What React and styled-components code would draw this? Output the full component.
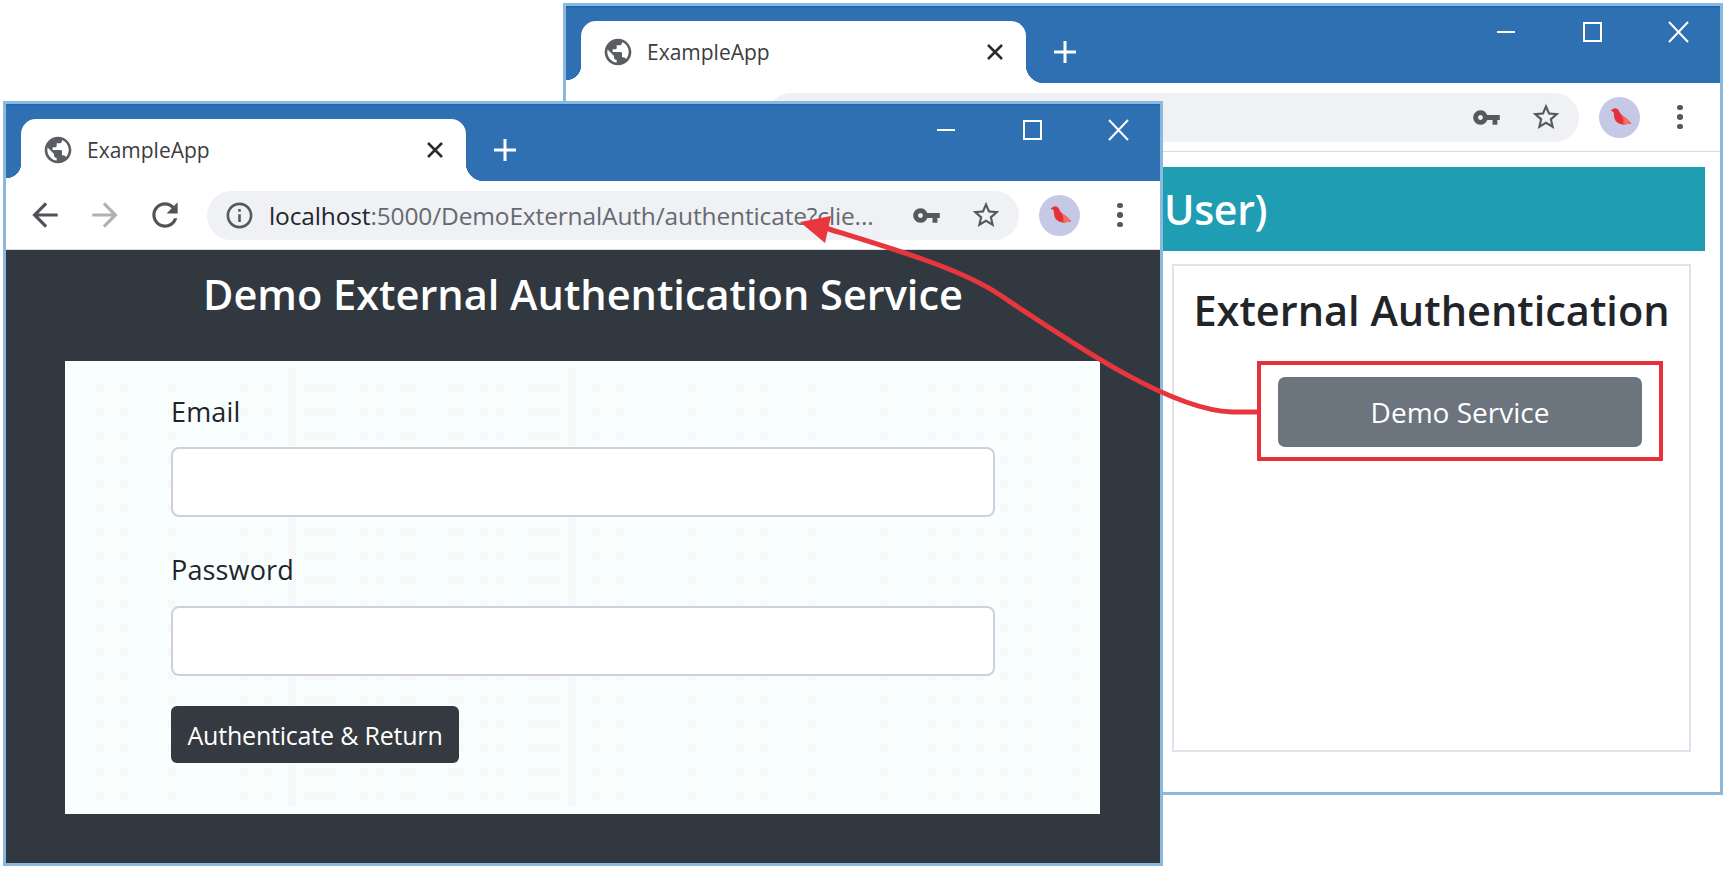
import React from 'react';
import styled, { createGlobalStyle } from 'styled-components';

const BLUE = '#2f70b3';
const FONT = '"Open Sans", "Noto Sans", sans-serif';

// faint specks in the card: [x from card edge, width], repeated every 24px down the card
const SPECKS = [
  [31, 8], [55, 8], [103, 8], [175, 8], [199, 8], [239, 32], [295, 8], [311, 8],
  [335, 16], [383, 16], [415, 8], [431, 8], [463, 32], [527, 8], [551, 8], [623, 8],
  [671, 8], [695, 8], [743, 8], [815, 8], [863, 8], [887, 8], [911, 8], [935, 8],
  [959, 8], [1007, 8],
];
const SPECK_LINES = [223, 503];
const speck = 'linear-gradient(#f7f8f8 8px, transparent 8px)';
const line = 'linear-gradient(#f7f8f8, #f7f8f8)';

const Global = createGlobalStyle`
  html, body { margin: 0; padding: 0; background: #fff; }
  * { box-sizing: border-box; }
`;

const Desktop = styled.div`
  position: relative;
  width: 1727px;
  height: 871px;
  overflow: hidden;
  background: #fff;
  font-family: ${FONT};
`;

const Window = styled.div`
  position: absolute;
  left: ${p => p.$left}px;
  top: ${p => p.$top}px;
  width: 1160px;
  height: ${p => p.$height}px;
  display: flex;
  flex-direction: column;
  border: 3px solid #8ab9dd;
  background: #fff;
`;

const TitleBar = styled.div`
  flex: none;
  height: 77px;
  display: flex;
  align-items: flex-end;
  padding-left: 15px;
  background: ${BLUE};
  border-top: 2px solid #1f68b4;
`;

const Tab = styled.div`
  position: relative;
  width: 445px;
  height: 62px;
  display: flex;
  align-items: center;
  padding: 0 22px 0 21px;
  background: #fff;
  border-radius: 15px 15px 0 0;
  &::before, &::after {
    content: '';
    position: absolute;
    bottom: 0;
    width: 18px;
    height: 18px;
  }
  &::before {
    left: -15px;
    width: 15px;
    background: radial-gradient(circle at 0 0, ${BLUE} 15px, #fff 15.5px);
  }
  &::after {
    right: -18px;
    background: radial-gradient(circle at 100% 0, ${BLUE} 18px, #fff 18.5px);
  }
`;

const TabTitle = styled.span`
  flex: 1;
  margin-left: 13px;
  font-size: 21px;
  color: #3c3c3c;
`;

const NewTab = styled.svg`
  flex: none;
  align-self: center;
  margin: 13px 0 0 27px;
`;

const Controls = styled.div`
  margin-left: auto;
  align-self: flex-start;
  display: flex;
  gap: 62px;
  padding: 12px 30px 0 0;
`;

const Toolbar = styled.div`
  flex: none;
  height: 69px;
  display: flex;
  align-items: center;
  padding-left: 20px;
  background: #fff;
  border-bottom: 1px solid #d8dadf;
`;

const NavGroup = styled.div`
  display: flex;
  gap: 22px;
  margin-right: 23px;
`;

const Omnibox = styled.div`
  width: 812px;
  height: 49px;
  display: flex;
  align-items: center;
  padding: 0 17px 0 17px;
  background: #eff1f5;
  border-radius: 25px;
`;

const Url = styled.div`
  flex: 1;
  margin-left: 14px;
  font-size: 24.5px;
  letter-spacing: -0.14px;
  white-space: nowrap;
  color: #666a70;
  b { font-weight: 400; color: #24272b; }
`;

const Tools = styled.div`
  display: flex;
  align-items: center;
  gap: 29px;
`;

const Avatar = styled.div`
  flex: none;
  width: 41px;
  height: 41px;
  margin-left: 20px;
  display: flex;
  align-items: center;
  justify-content: center;
  border-radius: 50%;
  background: #c6c9e6;
`;

const Dots = styled.div`
  flex: none;
  margin-left: 37px;
  display: flex;
  flex-direction: column;
  gap: 4px;
  i {
    width: 5.5px;
    height: 5.5px;
    border-radius: 50%;
    background: #55585c;
  }
`;

const Icon = styled.svg`
  flex: none;
  display: block;
  fill: ${p => p.$color || '#55585c'};
`;

const DarkPage = styled.div`
  flex: 1;
  display: flex;
  flex-direction: column;
  align-items: center;
  background: #31383f;
`;

const DarkHeading = styled.h1`
  margin: 0;
  height: 111px;
  padding-top: 14px;
  font-size: 41.5px;
  line-height: 60px;
  font-weight: 600;
  color: #fff;
`;

const Card = styled.form`
  width: 1035px;
  height: 453px;
  margin-left: -1px;
  padding: 25px 105px 0 106px;
  border-style: solid;
  border-color: #f9ffff;
  border-width: 7px 0;
  background-color: #f9ffff;
  background-clip: padding-box;
  background-image: ${SPECK_LINES.map(() => line).join(', ')}, ${SPECKS.map(() => speck).join(', ')};
  background-size: ${SPECK_LINES.map(() => '8px 100%').join(', ')}, ${SPECKS.map(s => `${s[1]}px 24px`).join(', ')};
  background-position: ${SPECK_LINES.map(x => `${x}px 0`).join(', ')}, ${SPECKS.map(s => `${s[0]}px 16px`).join(', ')};
  background-repeat: repeat-y;
`;

const Label = styled.label`
  display: block;
  height: ${p => p.$height}px;
  font-size: 27px;
  line-height: 37px;
  letter-spacing: 0.15px;
  color: #212529;
`;

const Input = styled.input`
  display: block;
  width: 100%;
  height: 70px;
  margin-bottom: ${p => p.$gap}px;
  border: 2px solid #ced1db;
  border-radius: 8px;
  background: #fff;
`;

const DarkButton = styled.button`
  display: block;
  width: 288px;
  height: 57px;
  padding: 0;
  border: 0;
  border-radius: 6px;
  background: #343a40;
  color: #fff;
  font-family: ${FONT};
  font-size: 25px;
  letter-spacing: -0.2px;
`;

const LightPage = styled.div`
  flex: 1;
  display: flex;
  flex-direction: column;
  align-items: flex-end;
  padding: 15px 15px 40px 0;
`;

const Banner = styled.div`
  width: 1120px;
  height: 84px;
  padding-left: 579px;
  background: #1f9db3;
  color: #fff;
  font-size: 41px;
  font-weight: 600;
  line-height: 84px;
  letter-spacing: -0.3px;
`;

const Panel = styled.div`
  flex: 1;
  width: 519px;
  margin: 13px 14px 0 0;
  display: flex;
  flex-direction: column;
  border: 2px solid #dfe2ea;
`;

const PanelHeading = styled.h2`
  margin: 0;
  height: 95px;
  padding-top: 14px;
  text-align: center;
  font-size: 41.5px;
  font-weight: 600;
  line-height: 60px;
  color: #212529;
`;

const Highlight = styled.div`
  align-self: flex-end;
  width: 406px;
  height: 100px;
  margin-right: 26px;
  padding: 12px 17px;
  border: 4px solid #e8303a;
`;

const ServiceButton = styled.button`
  display: block;
  width: 100%;
  height: 70px;
  padding: 0;
  border: 0;
  border-radius: 7px;
  background: #6c757d;
  color: #fff;
  font-family: ${FONT};
  font-size: 28px;
`;

const Overlay = styled.svg`
  position: absolute;
  left: 0;
  top: 0;
  pointer-events: none;
`;

const paths = {
  globe: 'M12 2C6.48 2 2 6.48 2 12s4.48 10 10 10 10-4.48 10-10S17.52 2 12 2zm-1 17.93c-3.95-.49-7-3.85-7-7.93 0-.62.08-1.21.21-1.79L9 15v1c0 1.1.9 2 2 2v1.93zm6.9-2.54c-.26-.81-1-1.39-1.9-1.39h-1v-3c0-.55-.45-1-1-1H8v-2h2c.55 0 1-.45 1-1V7h2c1.1 0 2-.9 2-2v-.41c2.93 1.19 5 4.06 5 7.41 0 2.08-.8 3.97-2.1 5.39z',
  back: 'M20 11H7.83l5.59-5.59L12 4l-8 8 8 8 1.41-1.41L7.83 13H20v-2z',
  forward: 'M12 4l-1.41 1.41L16.17 11H4v2h12.17l-5.58 5.59L12 20l8-8z',
  reload: 'M17.65 6.35C16.2 4.9 14.21 4 12 4c-4.42 0-7.99 3.58-7.99 8s3.57 8 7.99 8c3.73 0 6.84-2.55 7.73-6h-2.08c-.82 2.33-3.04 4-5.65 4-3.31 0-6-2.69-6-6s2.69-6 6-6c1.66 0 3.14.69 4.22 1.78L13 11h7V4l-2.35 2.35z',
  info: 'M11 17h2v-6h-2v6zm1-15C6.48 2 2 6.48 2 12s4.48 10 10 10 10-4.48 10-10S17.52 2 12 2zm0 18c-4.41 0-8-3.59-8-8s3.59-8 8-8 8 3.59 8 8-3.59 8-8 8zM11 9h2V7h-2v2z',
  key: 'M12.65 10C11.83 7.67 9.61 6 7 6c-3.31 0-6 2.69-6 6s2.69 6 6 6c2.61 0 4.83-1.67 5.65-4H17v4h4v-4h2v-4H12.65zM7 14c-1.1 0-2-.9-2-2s.9-2 2-2 2 .9 2 2-.9 2-2 2z',
  star: 'M22 9.24l-7.19-.62L12 2 9.19 8.63 2 9.24l5.46 4.73L5.82 21 12 17.27 18.18 21l-1.63-7.03L22 9.24zM12 15.4l-3.76 2.27 1-4.28-3.32-2.88 4.38-.38L12 6.1l1.71 4.04 4.38.38-3.32 2.88 1 4.28L12 15.4z',
};

const Glyph = ({ name, size, color }) => (
  <Icon viewBox="0 0 24 24" width={size} height={size} $color={color}>
    <path d={paths[name]} />
  </Icon>
);

const Bird = () => (
  <svg viewBox="0 0 26 26" width="26" height="26">
    <path fill="#e5303a" d="M3.5 6.500 6 5c2-1.500 5-.500 6 2 1 3 4 5 7 7l5.500 5.500L20 20c-3 1-4 1-6 0-4-.500-7-4-7-9l-.500-3z" />
    <path fill="#f0705c" d="M14 11c2 1 3.500 2 5 3l5.500 5.500L20 20c-2 .600-3 .700-4 .500 1-3 .500-6.500-2-9.500z" />
  </svg>
);

const BrowserChrome = ({ url }) => (
  <>
    <TitleBar>
      <Tab>
        <Glyph name="globe" size={32} color="#5a5d61" />
        <TabTitle>ExampleApp</TabTitle>
        <svg width="18" height="18" viewBox="0 0 18 18">
          <path d="M2 2l14 14M16 2L2 16" stroke="#2b2b2b" strokeWidth="2.6" />
        </svg>
      </Tab>
      <NewTab width="24" height="24" viewBox="0 0 24 24">
        <path d="M12 1v22M1 12h22" stroke="#fff" strokeWidth="3" />
      </NewTab>
      <Controls>
        <svg width="24" height="24" viewBox="0 0 24 24">
          <path d="M3 12h18" stroke="#fff" strokeWidth="2" />
        </svg>
        <svg width="24" height="24" viewBox="0 0 24 24">
          <rect x="4" y="3" width="17" height="18" fill="none" stroke="#fff" strokeWidth="2" />
        </svg>
        <svg width="24" height="24" viewBox="0 0 24 24">
          <path d="M3 2l19 20M22 2L3 22" stroke="#fff" strokeWidth="2" />
        </svg>
      </Controls>
    </TitleBar>
    <Toolbar>
      <NavGroup>
        <Glyph name="back" size={38} color="#505357" />
        <Glyph name="forward" size={38} color="#aeb0b3" />
        <Glyph name="reload" size={38} color="#505357" />
      </NavGroup>
      <Omnibox>
        <Glyph name="info" size={31} />
        <Url>{url}</Url>
        <Tools>
          <Glyph name="key" size={29} />
          <Glyph name="star" size={32} />
        </Tools>
      </Omnibox>
      <Avatar><Bird /></Avatar>
      <Dots><i /><i /><i /></Dots>
    </Toolbar>
  </>
);

const Arrow = () => (
  <Overlay width="1727" height="871" viewBox="0 0 1727 871">
    <path
      fill="none"
      stroke="#e8363e"
      strokeWidth="5"
      d="M1258 412 L1232 412 C1170 410 1075 345 1000 295 C960 268 890 248 822 227"
    />
    <polygon fill="#e8363e" points="800,222 831,216 825,243" />
  </Overlay>
);

export default function App() {
  return (
    <Desktop>
      <Global />
      <Window $left={563} $top={3} $height={792}>
        <BrowserChrome />
        <LightPage>
          <Banner>User)</Banner>
          <Panel>
            <PanelHeading>External Authentication</PanelHeading>
            <Highlight>
              <ServiceButton type="button">Demo Service</ServiceButton>
            </Highlight>
          </Panel>
        </LightPage>
      </Window>
      <Window $left={3} $top={101} $height={765}>
        <BrowserChrome url={<><b>localhost</b>:5000/DemoExternalAuth/authenticate?clie...</>} />
        <DarkPage>
          <DarkHeading>Demo External Authentication Service</DarkHeading>
          <Card>
            <Label $height={54}>Email</Label>
            <Input $gap={34} />
            <Label $height={55}>Password</Label>
            <Input $gap={30} />
            <DarkButton type="button">Authenticate &amp; Return</DarkButton>
          </Card>
        </DarkPage>
      </Window>
      <Arrow />
    </Desktop>
  );
}
